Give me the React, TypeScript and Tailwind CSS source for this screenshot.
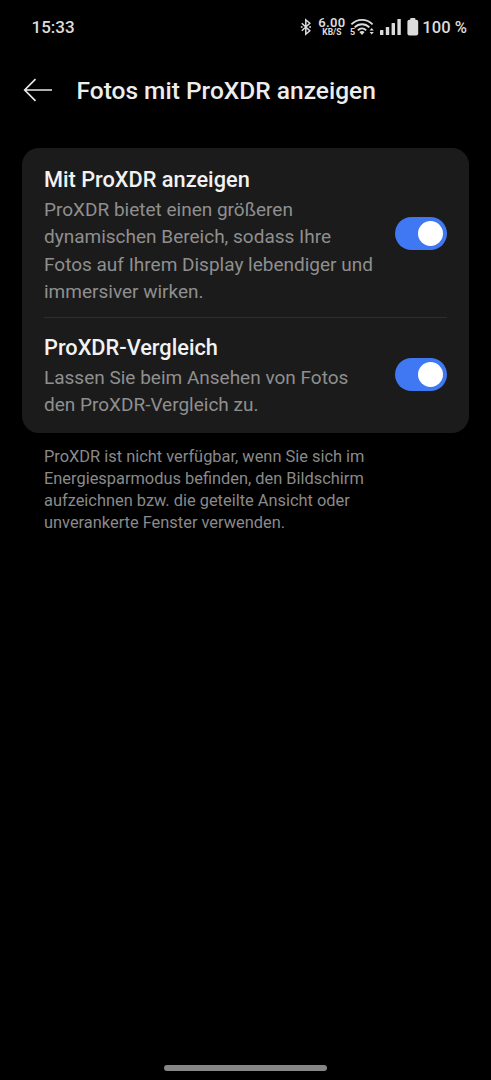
import { useState } from 'react';

const settings = [
  {
    id: 'show',
    title: 'Mit ProXDR anzeigen',
    desc: 'ProXDR bietet einen größeren\ndynamischen Bereich, sodass Ihre\nFotos auf Ihrem Display lebendiger und\nimmersiver wirken.',
    rowClass: 'h-[170px] border-b border-[#2d2d2d] pt-[18px]',
    toggleClass: 'mt-[51px]',
  },
  {
    id: 'compare',
    title: 'ProXDR-Vergleich',
    desc: 'Lassen Sie beim Ansehen von Fotos\nden ProXDR-Vergleich zu.',
    rowClass: 'h-[115px] pt-[16px]',
    toggleClass: 'mt-[24px]',
  },
];

const hint =
  'ProXDR ist nicht verfügbar, wenn Sie sich im\nEnergiesparmodus befinden, den Bildschirm\naufzeichnen bzw. die geteilte Ansicht oder\nunverankerte Fenster verwenden.';

function StatusBar() {
  return (
    <div className="flex h-[54px] items-center justify-between pl-[31.5px] pr-6 text-[#dcdcdc]">
      <span className="text-[17px] font-medium leading-5">15:33</span>
      <div className="flex items-center">
        {/* Bluetooth */}
        <svg width="12" height="18" viewBox="0 0 12 18" fill="none" stroke="currentColor" strokeWidth="1.5" className="mr-[6px]">
          <path d="M1.8 5.2 9.8 12.8 5.8 16.2V1.8L9.8 5.2 1.8 12.8" />
          <path d="M.8 9h1.8M9.2 9h1.8" />
        </svg>
        {/* Network speed */}
        <div className="mr-[4px] flex w-[28px] flex-col items-center whitespace-nowrap">
          <span className="text-[13px] font-semibold leading-[10px] tracking-[0.3px]">6.00</span>
          <span className="text-[8.5px] font-bold leading-[9px]">KB/S</span>
        </div>
        {/* Wi-Fi 5 */}
        <svg width="25" height="18" viewBox="0 0 25 18" fill="none" stroke="currentColor" strokeWidth="1.8" className="mr-[5px]">
          <path d="M1.4 6.3C7.2 .3 16.8 .3 22.6 6.3" />
          <path d="M4.6 9.4c4.2-4.2 10.6-4.2 14.8 0" />
          <path d="M7.8 12.3c2.5-2.4 5.9-2.4 8.4 0" />
          <path d="M9.4 14q2.6-1.8 5.2 0L12 17Z" fill="currentColor" stroke="none" />
          <path d="m19.6 12.4 2.1-2.5 2.1 2.5ZM19.6 14l2.1 2.5 2.1-2.5Z" fill="currentColor" stroke="none" />
          <text x="0" y="17" fontSize="9" fontWeight="700" fill="currentColor" stroke="none">5</text>
        </svg>
        {/* Signal */}
        <svg width="22" height="18" viewBox="0 0 22 18" fill="currentColor" className="mr-[5px]">
          <rect x="0" y="12" width="3.4" height="5" rx=".5" />
          <rect x="5.8" y="9" width="3.4" height="8" rx=".5" />
          <rect x="11.6" y="5" width="3.4" height="12" rx=".5" />
          <rect x="17.4" y="1" width="3.4" height="16" rx=".5" />
        </svg>
        {/* Battery */}
        <svg width="12" height="18" viewBox="0 0 12 18" fill="currentColor" className="mr-[3.5px]">
          <rect x="3.2" y="0" width="5.2" height="4" rx="1" />
          <rect x=".4" y="1.8" width="10.8" height="15.6" rx="2" />
        </svg>
        <span className="whitespace-nowrap pt-px text-[16.6px] font-medium leading-5">100 %</span>
      </div>
    </div>
  );
}

function Toggle({ label, className }: { label: string; className: string }) {
  const [on, setOn] = useState(true);

  return (
    <button
      role="switch"
      aria-checked={on}
      aria-label={label}
      onClick={() => setOn(!on)}
      className={`flex h-[33px] w-[52px] shrink-0 items-center rounded-full px-[4px] ${className} ${
        on ? 'justify-end bg-[#3f78f2]' : 'justify-start bg-[#4a4a4a]'
      }`}
    >
      <span className="h-[25px] w-[25px] rounded-full bg-white" />
    </button>
  );
}

export default function App() {
  return (
    <div className="flex h-[1080px] w-[491px] flex-col bg-black font-['Roboto',sans-serif]">
      <StatusBar />

      <header className="flex h-[72px] items-center gap-[23.5px] pl-[23px]">
        <svg width="30" height="24" viewBox="0 0 30 24" fill="none" stroke="#e8e8e8" strokeWidth="1.7">
          <path d="M29 12H2M12.5 1.2 1.7 12l10.8 10.8" />
        </svg>
        <h1 className="whitespace-nowrap pt-px text-[24.5px] font-medium leading-8 text-[#ededed]">
          Fotos mit ProXDR anzeigen
        </h1>
      </header>

      <main className="px-[22px] pt-[22px]">
        <div className="h-[285px] rounded-[17px] bg-[#1b1b1b] px-[22px]">
          {settings.map((item) => (
            <div key={item.id} className={`flex items-start justify-between ${item.rowClass}`}>
              <div className="whitespace-pre">
                <h2 className="mb-[2px] text-[21.75px] font-medium leading-[28px] text-[#f2f2f2]">{item.title}</h2>
                <p className="text-[19px] leading-[27.4px] text-[#8f8f8f]">{item.desc}</p>
              </div>
              <Toggle label={item.title} className={item.toggleClass} />
            </div>
          ))}
        </div>

        <p className="whitespace-pre px-[22px] pt-[13px] text-[16.4px] leading-[22px] text-[#8a8a8a]">{hint}</p>
      </main>

      {/* Gesture bar */}
      <div className="mx-auto mb-[9px] mt-auto h-[6px] w-[163px] rounded-full bg-[#868686]" />
    </div>
  );
}
